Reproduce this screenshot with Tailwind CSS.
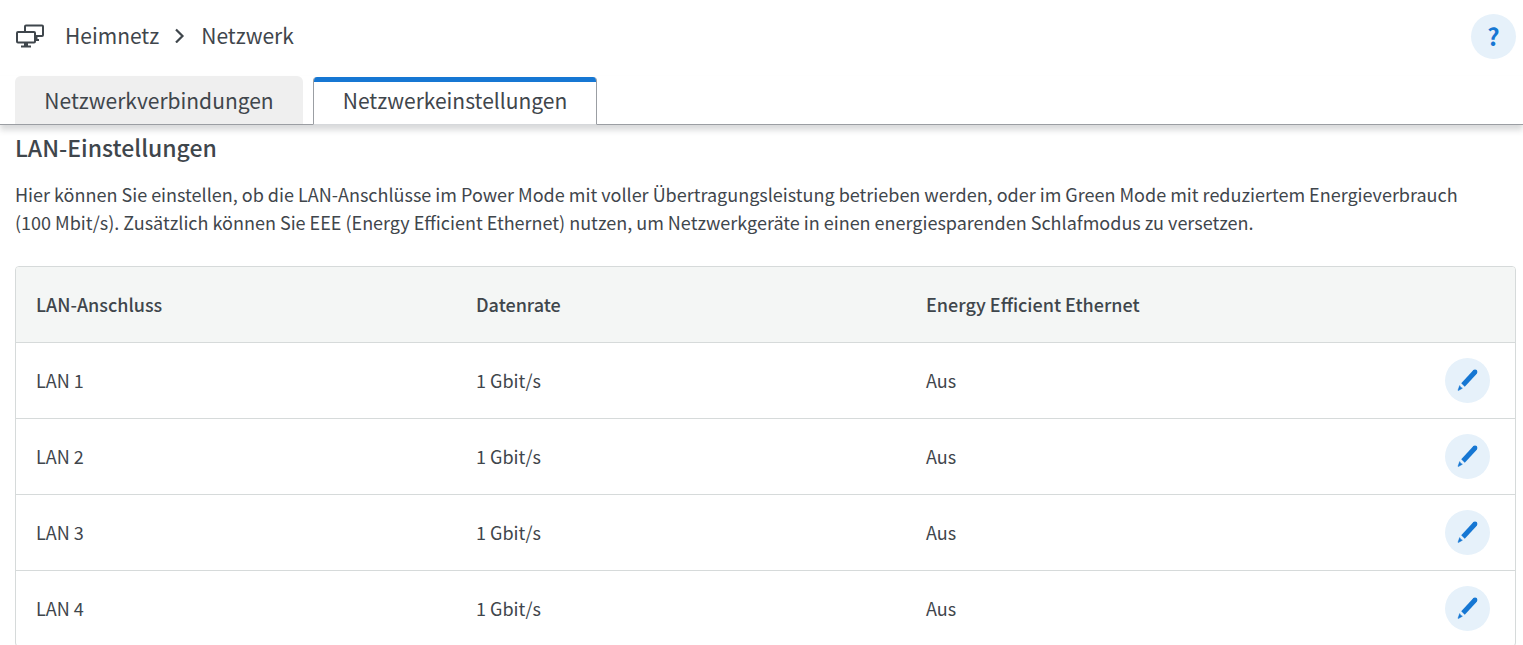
<!DOCTYPE html>
<html lang="de">
<head>
<meta charset="utf-8">
<meta name="viewport" content="width=device-width, initial-scale=1">
<title>Heimnetz – Netzwerk</title>
<script src="https://cdn.jsdelivr.net/npm/@tailwindcss/browser@4"></script>
</head>
<body class="h-screen overflow-hidden bg-white font-['Noto_Sans_CJK_SC','Noto_Sans',sans-serif] text-[18px] leading-7 text-[#3f464c]">
<svg class="hidden" aria-hidden="true">
  <symbol id="pencil" viewBox="0 0 24 24">
    <path d="M19 4 7 17" stroke="currentColor" stroke-width="4.8" fill="none"/>
    <circle cx="19" cy="4" r="2.4" fill="currentColor"/>
    <path d="M3.700 17.600Q4.200 19.600 6.400 20.200L2.400 22.600 2 22.200Z" fill="currentColor" stroke="currentColor" stroke-width=".5"/>
  </symbol>
</svg>
<header>
  <div class="flex h-[76px] items-start justify-between pt-[14px] pr-[7px] pl-[15px]">
    <nav aria-label="Brotkrumen" class="flex h-[42px] items-center text-[21px]">
      <svg class="h-[26px] w-[30px]" viewBox="0 0 30 26" fill="none" stroke="currentColor" stroke-width="2" aria-hidden="true">
        <path d="M10 9V4.500q0-1 1-1H27q1 0 1 1V13q0 1-1 1H20M20 18H24M21.500 14V18"/>
        <rect x="2" y="10" width="18" height="10.500" rx="1"/>
        <path d="M11 20V25" stroke-width="4"/><path d="M6 24.500H16"/>
      </svg>
      <a href="#" class="ml-5">Heimnetz</a>
      <svg class="mx-[15px] h-4 w-3" viewBox="0 0 12 16" fill="none" stroke="currentColor" stroke-width="2.2" aria-hidden="true"><path d="M2 2.500 8.500 9 2 15.500"/></svg>
      <a href="#">Netzwerk</a>
    </nav>
    <button type="button" aria-label="Hilfe" class="flex size-[45px] items-center justify-center rounded-full bg-[#e6f1fa] pb-0.5 text-[24px] font-bold text-[#1677d3]">?</button>
  </div>
  <nav aria-label="Seiten" class="flex h-[49px] gap-[10px] border-b border-[#9b9ea3] px-[15px] text-[21px] shadow-[0_5px_6px_rgba(60,64,70,0.2)]">
    <a href="#" class="flex w-[288px] items-center justify-center rounded-t-md bg-[#efefef]">Netzwerkverbindungen</a>
    <a href="#" aria-current="page" class="mt-px -mb-px flex w-[284px] flex-col overflow-hidden rounded-t border-x border-b border-x-[#9b9ea3] border-b-[#d6d8db] bg-white"><span class="h-[5px] bg-[#1677d3]"></span><span class="flex flex-1 items-center justify-center pb-1.5">Netzwerkeinstellungen</span></a>
  </nav>
</header>
<main class="pr-[7px] pl-[15px]">
  <h1 class="pt-1.5 text-[23px] leading-8 font-medium">LAN-Einstellungen</h1>
  <p class="mt-[17px]">Hier können Sie einstellen, ob die LAN-Anschlüsse im Power Mode mit voller Übertragungsleistung betrieben werden, oder im Green Mode mit reduziertem Energieverbrauch (100&nbsp;Mbit/s). Zusätzlich können Sie EEE (Energy Efficient Ethernet) nutzen, um Netzwerkgeräte in einen energiesparenden Schlafmodus zu versetzen.</p>
  <div class="mt-[30px] overflow-hidden rounded border border-[#d6dada]">
    <table class="w-full table-fixed text-left">
      <colgroup><col class="w-[440px]"><col class="w-[450px]"><col><col class="w-[120px]"></colgroup>
      <thead class="bg-[#f4f6f5]">
        <tr class="h-[75px] border-b border-[#d6dada]"><th class="pl-5 font-medium">LAN-Anschluss</th><th class="pl-5 font-medium">Datenrate</th><th class="pl-5 font-medium">Energy Efficient Ethernet</th><td></td></tr>
      </thead>
      <tbody>
        <tr class="h-[76px] border-b border-[#d6dada]"><td class="pl-5">LAN 1</td><td class="pl-5">1 Gbit/s</td><td class="pl-5">Aus</td><td class="pr-[25px]"><button type="button" aria-label="LAN 1 bearbeiten" class="ml-auto flex size-[45px] items-center justify-center rounded-full bg-[#e6f1fa] text-[#1677d3]"><svg class="size-6"><use href="#pencil"/></svg></button></td></tr>
        <tr class="h-[76px] border-b border-[#d6dada]"><td class="pl-5">LAN 2</td><td class="pl-5">1 Gbit/s</td><td class="pl-5">Aus</td><td class="pr-[25px]"><button type="button" aria-label="LAN 2 bearbeiten" class="ml-auto flex size-[45px] items-center justify-center rounded-full bg-[#e6f1fa] text-[#1677d3]"><svg class="size-6"><use href="#pencil"/></svg></button></td></tr>
        <tr class="h-[76px] border-b border-[#d6dada]"><td class="pl-5">LAN 3</td><td class="pl-5">1 Gbit/s</td><td class="pl-5">Aus</td><td class="pr-[25px]"><button type="button" aria-label="LAN 3 bearbeiten" class="ml-auto flex size-[45px] items-center justify-center rounded-full bg-[#e6f1fa] text-[#1677d3]"><svg class="size-6"><use href="#pencil"/></svg></button></td></tr>
        <tr class="h-[76px]"><td class="pl-5">LAN 4</td><td class="pl-5">1 Gbit/s</td><td class="pl-5">Aus</td><td class="pr-[25px]"><button type="button" aria-label="LAN 4 bearbeiten" class="ml-auto flex size-[45px] items-center justify-center rounded-full bg-[#e6f1fa] text-[#1677d3]"><svg class="size-6"><use href="#pencil"/></svg></button></td></tr>
      </tbody>
    </table>
  </div>
</main>
</body>
</html>
